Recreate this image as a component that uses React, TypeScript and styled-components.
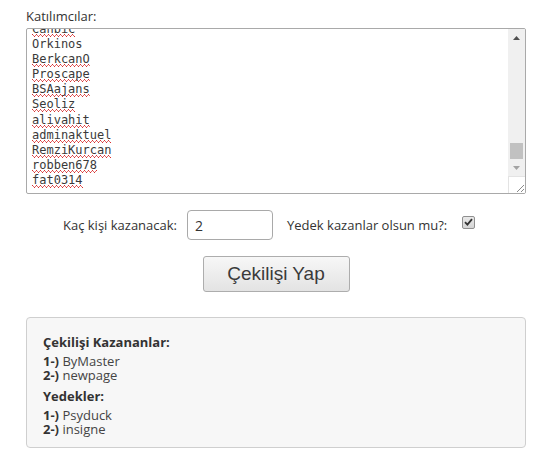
import React from 'react'
import styled, { createGlobalStyle } from 'styled-components'

const GlobalStyle = createGlobalStyle`
  body {
    margin: 0;
    background: #fff;
    font-family: "Open Sans", "Liberation Sans", sans-serif;
    font-size: 13px;
    color: #333;
  }
`

const Page = styled.div`
  width: 500px;
  padding: 7px 0 0 26px;
`

const FieldLabel = styled.div`
  line-height: 18px;
  margin-bottom: 3px;
`

const ListBox = styled.div`
  height: 164px;
  border: 1px solid #a9a9a9;
  border-radius: 2px;
  display: flex;
  overflow: hidden;
  background: #fff;
`

const Lines = styled.div`
  flex: 1;
  overflow: hidden;
  padding-left: 5px;
  font-family: "DejaVu Sans Mono", "Liberation Mono", monospace;
  font-size: 12px;
  line-height: 15px;
  color: #3a3a3a;
`

const LinesInner = styled.div`
  margin-top: -7px;
`

const Line = styled.div`
  height: 15.1px;
`

// spell-check squiggle: three 1px rows of a 4px zigzag under the word
const Word = styled.span<{ $misspelled?: boolean }>`
  display: inline-block;
  white-space: pre;
  height: 15px;
  background-repeat: no-repeat;
  background-image: ${p =>
    p.$misspelled
      ? `repeating-linear-gradient(90deg, #d83030 0 1px, transparent 1px 4px),
         repeating-linear-gradient(90deg, transparent 0 1px, #e06a6a 1px 2px, transparent 2px 3px, #e06a6a 3px 4px),
         repeating-linear-gradient(90deg, transparent 0 2px, #d83030 2px 3px, transparent 3px 4px)`
      : 'none'};
  background-size: 100% 1px, 100% 1px, 100% 1px;
  background-position: 0 12px, 0 13px, 0 14px;
`

const ScrollBar = styled.div`
  width: 17px;
  display: flex;
  flex-direction: column;
  background: #f0f0f0;
`

const ArrowButton = styled.div<{ $dim?: boolean }>`
  height: 17px;
  display: flex;
  align-items: center;
  justify-content: center;
  color: ${p => (p.$dim ? '#a3a3a3' : '#505050')};
`

const Track = styled.div`
  flex: 1;
  display: flex;
  flex-direction: column;
  justify-content: flex-end;
  padding: 0 2px;
`

const Thumb = styled.div`
  height: 16px;
  background: #c1c1c1;
`

const Resizer = styled.div`
  height: 17px;
  background: #fff;
  border-left: 1px solid #e3e3e3;
  border-top: 1px solid #e3e3e3;
  box-sizing: border-box;
  display: flex;
  align-items: flex-end;
  justify-content: flex-end;
`

const OptionsRow = styled.div`
  margin-top: 16px;
  padding-left: 37px;
  display: flex;
  align-items: center;
  height: 30px;
`

const InlineLabel = styled.span<{ $gap: number }>`
  margin-right: ${p => p.$gap}px;
  white-space: nowrap;
`

const CountInput = styled.input`
  box-sizing: border-box;
  width: 86px;
  height: 30px;
  border: 1px solid #a9a9a9;
  border-radius: 4px;
  padding: 0 7px;
  margin: 0 14px 0 0;
  font-family: "Open Sans", "Liberation Sans", sans-serif;
  font-size: 14px;
  color: #333;
  outline: none;
`

const CheckBox = styled.span`
  box-sizing: border-box;
  width: 13px;
  height: 13px;
  border: 1px solid #8f8f8f;
  border-radius: 2px;
  background: linear-gradient(#e9e9e9, #d4d4d4);
  display: inline-flex;
  align-items: center;
  justify-content: center;
  margin-top: -6px;
`

const ButtonRow = styled.div`
  margin-top: 16px;
  display: flex;
  justify-content: center;
`

const DrawButton = styled.button`
  width: 147px;
  height: 36px;
  border: 1px solid #adadad;
  border-radius: 3px;
  background: linear-gradient(#f7f7f7, #e3e3e3);
  font-family: "Liberation Sans", Arial, sans-serif;
  font-size: 19px;
  color: #3a3a3a;
  padding: 0;
  cursor: pointer;
`

const ResultBox = styled.div`
  margin-top: 25px;
  box-sizing: border-box;
  height: 131px;
  background: #f7f7f7;
  border: 1px solid #cfcfcf;
  border-radius: 4px;
  padding: 15px 16px 0;
`

const ResultTitle = styled.div<{ $top: number }>`
  font-weight: bold;
  line-height: 18px;
  margin-top: ${p => p.$top}px;
  margin-bottom: 3px;
`

const ResultItem = styled.div`
  line-height: 14px;
  color: #444;
  b {
    color: #333;
  }
`

const entries: { name: string; bad: boolean }[] = [
  { name: 'Canbic', bad: true },
  { name: 'Orkinos', bad: false },
  { name: 'BerkcanO', bad: true },
  { name: 'Proscape', bad: true },
  { name: 'BSAajans', bad: true },
  { name: 'Seoliz', bad: true },
  { name: 'alivahit', bad: true },
  { name: 'adminaktuel', bad: true },
  { name: 'RemziKurcan', bad: true },
  { name: 'robben678', bad: true },
  { name: 'fat0314', bad: true },
]

const winners = ['ByMaster', 'newpage']
const backups = ['Psyduck', 'insigne']

const App: React.FC = () => {
  return (
    <Page>
      <GlobalStyle />
      <FieldLabel>Katılımcılar:</FieldLabel>
      <ListBox>
        <Lines>
          <LinesInner>
            {entries.map(e => (
              <Line key={e.name}>
                <Word $misspelled={e.bad}>{e.name}</Word>
              </Line>
            ))}
          </LinesInner>
        </Lines>
        <ScrollBar>
          <ArrowButton>
            <svg width="7" height="4" viewBox="0 0 7 4">
              <path d="M0 4 L3.5 0 L7 4 Z" fill="currentColor" />
            </svg>
          </ArrowButton>
          <Track>
            <Thumb />
          </Track>
          <ArrowButton $dim>
            <svg width="7" height="4" viewBox="0 0 7 4">
              <path d="M0 0 L7 0 L3.5 4 Z" fill="currentColor" />
            </svg>
          </ArrowButton>
          <Resizer>
            <svg width="10" height="10" viewBox="0 0 10 10">
              <path d="M9 2 L2 9 M9 6 L6 9" stroke="#8a8a8a" strokeWidth="1" />
            </svg>
          </Resizer>
        </ScrollBar>
      </ListBox>

      <OptionsRow>
        <InlineLabel $gap={10}>Kaç kişi kazanacak:</InlineLabel>
        <CountInput defaultValue="2" />
        <InlineLabel $gap={15}>Yedek kazanlar olsun mu?:</InlineLabel>
        <CheckBox>
          <svg width="9" height="8" viewBox="0 0 9 8">
            <path d="M1 4.2 L3.4 6.6 L8 1.2" stroke="#333" strokeWidth="1.8" fill="none" />
          </svg>
        </CheckBox>
      </OptionsRow>

      <ButtonRow>
        <DrawButton>Çekilişi Yap</DrawButton>
      </ButtonRow>

      <ResultBox>
        <ResultTitle $top={0}>Çekilişi Kazananlar:</ResultTitle>
        {winners.map((w, i) => (
          <ResultItem key={w}>
            <b>{i + 1}-)</b> {w}
          </ResultItem>
        ))}
        <ResultTitle $top={5}>Yedekler:</ResultTitle>
        {backups.map((w, i) => (
          <ResultItem key={w}>
            <b>{i + 1}-)</b> {w}
          </ResultItem>
        ))}
      </ResultBox>
    </Page>
  )
}

export default App
